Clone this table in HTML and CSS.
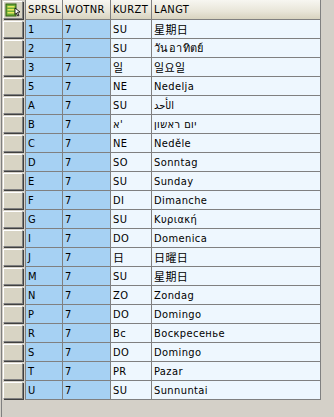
FILE: index.html
```html
<!DOCTYPE html>
<html>
<head>
<meta charset="utf-8">
<link rel="stylesheet" href="styles.css">
</head>
<body>
<div class="alv">
  <div class="grid">
    <div class="corner"><span class="selall"><svg width="18" height="16" viewBox="0 0 18 16"><rect x="2" y="2" width="10" height="12" fill="#6fae3a" stroke="#2f5f10" stroke-width="1"/><rect x="3.5" y="4" width="7" height="1.5" fill="#e8e860"/><rect x="3.5" y="7" width="7" height="1.5" fill="#e8e860"/><rect x="3.5" y="10" width="7" height="1.5" fill="#e8e860"/><path d="M11 6 L16 10 L13.5 10.3 L15 13.5 L13.8 14 L12.4 10.9 L11 12.5 Z" fill="#fff" stroke="#000" stroke-width="0.8"/></svg></span></div>
    <div class="hd">SPRSL</div><div class="hd">WOTNR</div><div class="hd">KURZT</div><div class="hd">LANGT</div>

    <div class="rh"><span class="btn"></span></div><div class="key">1</div><div class="key">7</div><div class="val">SU</div><div class="val">星期日</div>
    <div class="rh"><span class="btn"></span></div><div class="key">2</div><div class="key">7</div><div class="val">SU</div><div class="val">วันอาทิตย์</div>
    <div class="rh"><span class="btn"></span></div><div class="key">3</div><div class="key">7</div><div class="val">일</div><div class="val">일요일</div>
    <div class="rh"><span class="btn"></span></div><div class="key">5</div><div class="key">7</div><div class="val">NE</div><div class="val">Nedelja</div>
    <div class="rh"><span class="btn"></span></div><div class="key">A</div><div class="key">7</div><div class="val">SU</div><div class="val">الأحد</div>
    <div class="rh"><span class="btn"></span></div><div class="key">B</div><div class="key">7</div><div class="val">א'</div><div class="val">יום ראשון</div>
    <div class="rh"><span class="btn"></span></div><div class="key">C</div><div class="key">7</div><div class="val">NE</div><div class="val">Neděle</div>
    <div class="rh"><span class="btn"></span></div><div class="key">D</div><div class="key">7</div><div class="val">SO</div><div class="val">Sonntag</div>
    <div class="rh"><span class="btn"></span></div><div class="key">E</div><div class="key">7</div><div class="val">SU</div><div class="val">Sunday</div>
    <div class="rh"><span class="btn"></span></div><div class="key">F</div><div class="key">7</div><div class="val">DI</div><div class="val">Dimanche</div>
    <div class="rh"><span class="btn"></span></div><div class="key">G</div><div class="key">7</div><div class="val">SU</div><div class="val">Κυριακή</div>
    <div class="rh"><span class="btn"></span></div><div class="key">I</div><div class="key">7</div><div class="val">DO</div><div class="val">Domenica</div>
    <div class="rh"><span class="btn"></span></div><div class="key">J</div><div class="key">7</div><div class="val">日</div><div class="val">日曜日</div>
    <div class="rh"><span class="btn"></span></div><div class="key">M</div><div class="key">7</div><div class="val">SU</div><div class="val">星期日</div>
    <div class="rh"><span class="btn"></span></div><div class="key">N</div><div class="key">7</div><div class="val">ZO</div><div class="val">Zondag</div>
    <div class="rh"><span class="btn"></span></div><div class="key">P</div><div class="key">7</div><div class="val">DO</div><div class="val">Domingo</div>
    <div class="rh"><span class="btn"></span></div><div class="key">R</div><div class="key">7</div><div class="val">Вс</div><div class="val">Воскресенье</div>
    <div class="rh"><span class="btn"></span></div><div class="key">S</div><div class="key">7</div><div class="val">DO</div><div class="val">Domingo</div>
    <div class="rh"><span class="btn"></span></div><div class="key">T</div><div class="key">7</div><div class="val">PR</div><div class="val">Pazar</div>
    <div class="rh"><span class="btn"></span></div><div class="key">U</div><div class="key">7</div><div class="val">SU</div><div class="val">Sunnuntai</div>
  </div>
</div>
</body>
</html>
```

FILE: styles.css
```css
html, body {
  margin: 0;
  padding: 0;
  background: #d4d0c8;
}
body {
  width: 334px;
  height: 417px;
  overflow: hidden;
  font-family: "DejaVu Sans", "Noto Sans CJK SC", sans-serif;
  font-stretch: condensed;
  font-size: 11px;
  letter-spacing: 0.4px;
  color: #000;
}
.alv {
  height: 417px;
  border-left: 1px solid #808080;
  margin-left: 1px;
  box-sizing: border-box;
}
.grid {
  display: grid;
  grid-template-columns: 24px 37px 48px 41px 169px;
  grid-auto-rows: 19px;
  grid-template-rows: 20px;
  width: max-content;
}
.grid > div {
  box-sizing: border-box;
  border-right: 1px solid #808080;
  border-bottom: 1px solid #808080;
  white-space: nowrap;
  overflow: hidden;
  display: flex;
  align-items: center;
  padding-left: 2px;
}
.grid > .corner, .grid > .rh {
  padding: 1px 2px 1px 1px;
  border-right: 1px solid #808080;
  border-bottom: none;
  background: #d4d0c8;
}
.selall, .btn {
  display: block;
  width: 100%;
  height: 100%;
  box-sizing: border-box;
  background: #d8d4c4;
  border-top: 1px solid #fff;
  border-left: 1px solid #fff;
  border-right: 1px solid #808080;
  border-bottom: 1px solid #808080;
  box-shadow: 1px 1px 0 #404040;
}
.selall {
  display: flex;
  align-items: center;
  justify-content: center;
}
.hd {
  background: linear-gradient(#f7f6f1, #e8e5d8 60%, #d8d3bf);
}
.key {
  background: #a6d1f3;
}
.val {
  background: #eef7fe;
}
```
